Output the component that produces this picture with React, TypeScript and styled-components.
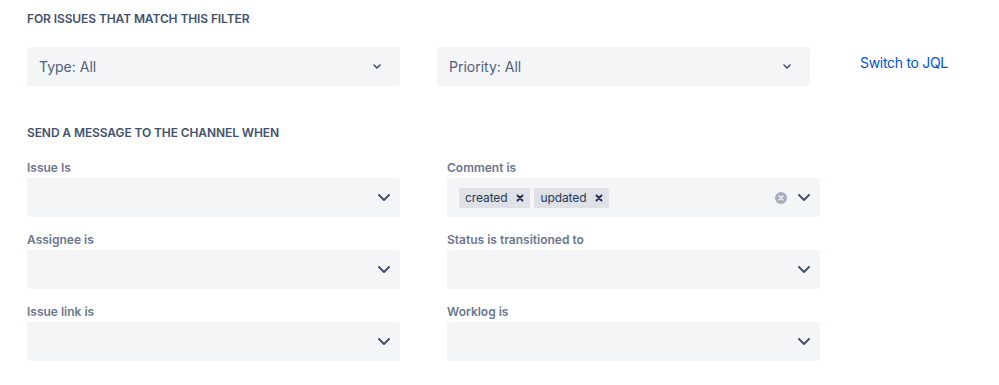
import React from 'react';
import styled, { createGlobalStyle } from 'styled-components';

const Global = createGlobalStyle`
  body {
    margin: 0;
    background: #ffffff;
    font-family: Inter, "Noto Sans", "Liberation Sans", sans-serif;
  }
`

const Page = styled.div`
  padding: 11px 27px 0 27px;
  width: 999px;
  box-sizing: border-box;
`

const Heading = styled.h2`
  margin: 0;
  font-size: 12px;
  line-height: 16px;
  font-weight: 600;
  color: #42526e;
  text-transform: uppercase;
  letter-spacing: -0.1px;
`

const FilterRow = styled.div`
  display: flex;
  align-items: center;
  margin-top: 20px;
  margin-bottom: 39px;
`

const FilterSelect = styled.div`
  width: 373px;
  height: 39px;
  box-sizing: border-box;
  display: flex;
  align-items: center;
  justify-content: space-between;
  padding: 0 19px 0 12px;
  background: #f4f5f7;
  border-radius: 3px;
  font-size: 14px;
  color: #505f79;
  margin-right: 37px;
`

const SwitchLink = styled.a`
  margin-left: 13px;
  margin-top: -9px;
  font-size: 14px;
  letter-spacing: -0.3px;
  color: #0052cc;
  text-decoration: none;
  cursor: pointer;
`

const Grid = styled.div`
  display: grid;
  grid-template-columns: 373px 373px;
  column-gap: 47px;
  row-gap: 15px;
  margin-top: 19px;
`

const Field = styled.div`
  display: flex;
  flex-direction: column;
`

const Label = styled.label`
  font-size: 12px;
  line-height: 16px;
  font-weight: 600;
  color: #6b778c;
  margin-bottom: 2px;
`

const Select = styled.div`
  height: 39px;
  box-sizing: border-box;
  display: flex;
  align-items: center;
  padding: 0 10px 0 12px;
  background: #f4f5f7;
  border-radius: 3px;
`

const Values = styled.div`
  flex: 1;
  display: flex;
  gap: 4px;
`

const Tag = styled.span`
  display: inline-flex;
  align-items: center;
  height: 20px;
  padding: 0 6px 0 6px;
  gap: 9px;
  background: #dfe1e6;
  border-radius: 2px;
  font-size: 12px;
  letter-spacing: -0.1px;
  color: #253858;
`

const Indicators = styled.div`
  display: flex;
  align-items: center;
  gap: 11px;
`

const SmallChevron = () => (
  <svg width="8" height="5" viewBox="0 0 8 5">
    <path d="M1 1 L4 4 L7 1" fill="none" stroke="#42526e" strokeWidth="1.6" strokeLinecap="round" strokeLinejoin="round" />
  </svg>
)

const Chevron = () => (
  <svg width="12" height="7" viewBox="0 0 12 7">
    <path d="M1 1 L6 6 L11 1" fill="none" stroke="#42526e" strokeWidth="2" strokeLinecap="round" strokeLinejoin="round" />
  </svg>
)

const CrossIcon = () => (
  <svg width="8" height="8" viewBox="0 0 8 8">
    <path d="M1.5 1.5 L6.5 6.5 M6.5 1.5 L1.5 6.5" stroke="#172b4d" strokeWidth="1.8" strokeLinecap="round" />
  </svg>
)

const ClearIcon = () => (
  <svg width="12" height="12" viewBox="0 0 12 12">
    <circle cx="6" cy="6" r="6" fill="#a5adba" />
    <path d="M4 4 L8 8 M8 4 L4 8" stroke="#f4f5f7" strokeWidth="1.6" strokeLinecap="round" />
  </svg>
)

const fields: { label: string; tags?: string[] }[] = [
  { label: 'Issue Is' },
  { label: 'Comment is', tags: ['created', 'updated'] },
  { label: 'Assignee is' },
  { label: 'Status is transitioned to' },
  { label: 'Issue link is' },
  { label: 'Worklog is' },
]

export default function App() {
  return (
    <Page>
      <Global />
      <Heading>For issues that match this filter</Heading>
      <FilterRow>
        <FilterSelect>
          <span>Type: All</span>
          <SmallChevron />
        </FilterSelect>
        <FilterSelect>
          <span>Priority: All</span>
          <SmallChevron />
        </FilterSelect>
        <SwitchLink>Switch to JQL</SwitchLink>
      </FilterRow>
      <Heading>Send a message to the channel when</Heading>
      <Grid>
        {fields.map((f) => (
          <Field key={f.label}>
            <Label>{f.label}</Label>
            <Select>
              <Values>
                {f.tags?.map((t) => (
                  <Tag key={t}>
                    {t}
                    <CrossIcon />
                  </Tag>
                ))}
              </Values>
              <Indicators>
                {f.tags && <ClearIcon />}
                <Chevron />
              </Indicators>
            </Select>
          </Field>
        ))}
      </Grid>
    </Page>
  )
}
